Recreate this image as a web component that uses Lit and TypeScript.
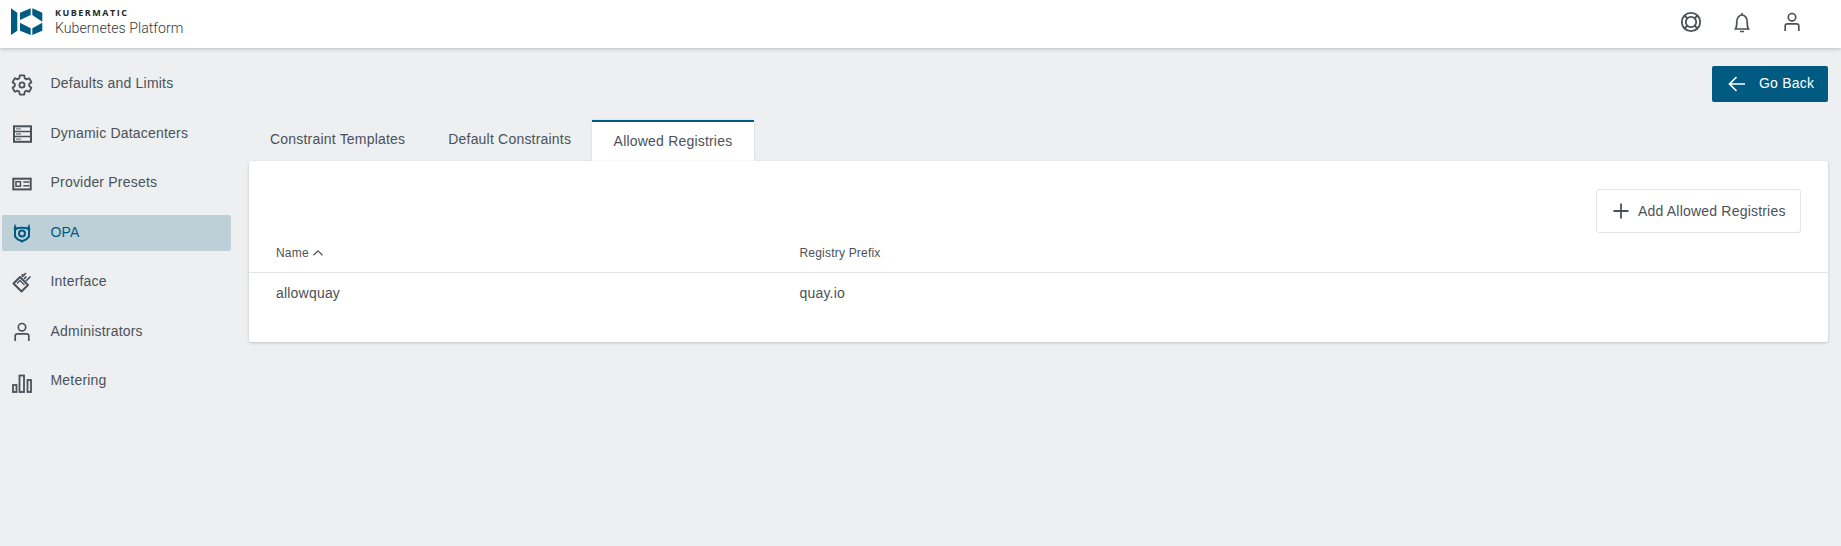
import { LitElement, html, css, svg } from "lit";
import { customElement } from "lit/decorators.js";

const I = (p: unknown, s = 24) => html`<svg class="ic" width=${s} height=${s} viewBox="0 0 24 24" fill="none" stroke="currentColor" stroke-width="1.7">${p}</svg>`;
const person = svg`<circle cx="12" cy="7.200" r="3.700"/><path d="M5.200 21v-5q0-2.200 2.200-2.200h9.200q2.200 0 2.200 2.200v5"/>`;
const nav = [
  ["Defaults and Limits", svg`<path stroke-width="1.800" stroke-linejoin="round" d="M19.140 12.940c.04-.3.06-.61.06-.94 0-.32-.02-.64-.07-.94l2.030-1.580c.18-.14.23-.41.12-.61l-1.920-3.320c-.12-.22-.37-.29-.59-.22l-2.390.96c-.5-.38-1.030-.7-1.620-.94l-.36-2.540c-.04-.24-.24-.41-.48-.41h-3.840c-.24 0-.43.17-.47.41l-.36 2.540c-.59.24-1.130.57-1.620.94l-2.390-.96c-.22-.08-.47 0-.59.22L2.740 8.870c-.12.21-.08.47.12.61l2.030 1.580c-.05.3-.09.63-.09.94s.02.64.07.94l-2.030 1.580c-.18.14-.23.41-.12.61l1.920 3.320c.12.22.37.29.59.22l2.390-.96c.5.38 1.030.7 1.620.94l.36 2.540c.05.24.24.41.48.41h3.840c.24 0 .44-.17.47-.41l.36-2.540c.59-.24 1.130-.56 1.620-.94l2.390.96c.22.08.47 0 .59-.22l1.920-3.320c.12-.22.07-.47-.12-.61l-2.010-1.580z"/><circle cx="12" cy="12" r="2.600" stroke-width="1.800"/>`],
  ["Dynamic Datacenters", svg`<rect x="4" y="4.300" width="17" height="15.500" stroke-width="2"/><path stroke-width="1.500" d="M4 9.500h17M4 14.600h17"/><path stroke-width="1.300" opacity=".7" d="M6 6.900h5M6 12h5M6 17.200h5"/>`],
  ["Provider Presets", svg`<rect x="3.300" y="6.700" width="17.400" height="10.700" stroke-width="2"/><rect x="6" y="9.700" width="4.500" height="4.500" stroke-width="1.500"/><path stroke-width="1.500" d="M13.300 10h6M13.300 13.800h6"/>`],
  ["OPA", svg`<path fill="currentColor" stroke="none" d="M3.600 8.500L4.800 2.500l1.700 3.800v3zM20.400 8.500L19.200 2.500l-1.700 3.800v3z"/><path stroke-width="2" d="M5 8q7-2.600 14 0"/><path stroke-width="2" d="M5 8v7.500l2.800 3 4.200 1.700 4.200-1.700 2.800-3V8"/><path stroke-width="1.600" d="M12 19.500v2"/><circle cx="12" cy="12.500" r="3" stroke-width="2"/>`],
  ["Interface", svg`<path stroke-width="2" stroke-linejoin="round" d="M3.500 12.500L10 6l8 8-6.500 6.500z"/><path stroke-width="1.300" d="M7 12.500l3-3 4.500 4.500"/><path stroke-width="1.700" d="M12 6l4-4M14 8l2.500-2.500M16 10l4.500-4.500M11.500 3.500l3 1.500"/>`],
  ["Administrators", person],
  ["Metering", svg`<rect x="3" y="15" width="3.500" height="7" stroke-width="1.800"/><rect x="9.500" y="5.500" width="4.500" height="16.500" stroke-width="1.800"/><rect x="17.500" y="10" width="3.500" height="12" stroke-width="1.800"/>`],
];

@customElement("app-root")
export class AppRoot extends LitElement {
  static styles = css`
    :host { display: block; height: 546px; background: #edeff1; color: #4a5259; font-family: "Liberation Sans", Arial, sans-serif; font-size: 14px; letter-spacing: .2px; overflow: hidden; }
    .ic { display: block; flex: none; }
    header { height: 48px; background: #fff; box-shadow: 0 1px 4px rgba(0,0,0,.22); display: flex; align-items: center; position: relative; }
    .logo { margin-left: 11px; margin-top: -4px; display: block; }
    .brand { margin-left: 12px; display: flex; flex-direction: column; letter-spacing: 0; margin-top: -5px; }
    .brand b { font: 700 9px "Open Sans", sans-serif; letter-spacing: 1.5px; color: #24292d; line-height: 11px; }
    .brand span { font: 300 14.2px Roboto, sans-serif; color: #333a40; line-height: 18px; margin-top: 1px; }
    .top { margin-left: auto; display: flex; gap: 26px; margin-right: 37px; margin-top: -4px; }
    .top .ic:first-child { margin-right: 1px; }
    .body { display: grid; grid-template-columns: 249px 1fr; }
    nav { padding: 18.500px 18px 0 2px; display: flex; flex-direction: column; gap: 13.500px; }
    .item { height: 36px; display: flex; align-items: center; border-radius: 2px; padding-left: 8px; gap: 16.500px; }
    .item span { padding-bottom: 3px; }
    .item.on { background: #bdd0d8; color: #005a81; }
    main { padding: 18px 13px 0 0; }
    .back { display: flex; justify-content: flex-end; }
    .go { width: 116px; height: 36px; box-sizing: border-box; background: #005a81; color: #fff; border-radius: 2px; display: flex; align-items: center; padding-left: 13px; gap: 10px; }
    .go span { padding-bottom: 2px; }
    .tabs { display: flex; margin-top: 18px; height: 41px; }
    .tab { display: flex; align-items: center; padding: 0 21.500px 4px; }
    .tab:first-child { padding-left: 21px; }
    .tab.on { background: #fff; border-top: 2px solid #005a81; box-sizing: border-box; padding: 0 22px 2px; margin-left: -1px; box-shadow: 0 0 2px rgba(0,0,0,.12); }
    .card { position: relative; background: #fff; border-radius: 2px; box-shadow: 0 1px 3px rgba(0,0,0,.2); height: 181px; padding-top: 28px; box-sizing: border-box; }
    .bar { display: flex; justify-content: flex-end; padding-right: 27px; }
    .add { width: 205px; height: 44px; box-sizing: border-box; border: 1px solid #e2e4e6; border-radius: 3px; display: flex; align-items: center; padding-left: 11.500px; gap: 5.500px; }
    .row { display: grid; grid-template-columns: 523.500px 1fr; padding-left: 27px; align-items: center; }
    .head { font-size: 12px; height: 39px; border-bottom: 1px solid #e3e5e7; }
    .name { display: flex; align-items: center; }
    .cell { height: 40px; }
  `;
  render() {
    return html`
      <header>
        <svg class="logo" width="32" height="28" viewBox="0 0 32 28" fill="#005a81">
          <path d="M0 .3L6.300 4.700V22.700L0 27zM9 4.700L19.700.3V7L9 12zM21.300.3L31.300 4.700V13.700L21.300 7zM9 14.700L19.700 20.300V27L9 22.700zM21.300 20.300L31.300 14.700V22.700L21.300 27z"/>
        </svg>
        <div class="brand"><b>KUBERMATIC</b><span>Kubernetes Platform</span></div>
        <div class="top">
          ${I(svg`<circle cx="12" cy="12" r="9.200" stroke-width="1.800"/><circle cx="12" cy="12" r="5.200" stroke-width="1.800"/><path stroke-width="1.800" d="M5.500 5.500l3 3M18.500 5.500l-3 3M5.500 18.500l3-3M18.500 18.500l-3-3"/>`)}
          ${I(svg`<path d="M5.500 19c1.200-1.800 1.300-3.500 1.300-7 0-4 2.300-7 5.200-7s5.200 3 5.200 7c0 3.500.1 5.200 1.300 7zM10 21.500h4M12 3v2"/>`)}
          ${I(person)}
        </div>
      </header>
      <div class="body">
        <nav>${nav.map(([t, p]) => html`<div class="item ${t === "OPA" ? "on" : ""}">${I(p)}<span>${t}</span></div>`)}</nav>
        <main>
          <div class="back"><div class="go">${I(svg`<path stroke-width="1.700" d="M20 12H4.500M11.500 5l-7 7 7 7"/>`)}<span>Go Back</span></div></div>
          <div class="tabs">
            <div class="tab">Constraint Templates</div>
            <div class="tab">Default Constraints</div>
            <div class="tab on">Allowed Registries</div>
          </div>
          <div class="card">
            <div class="bar"><div class="add">${I(svg`<path stroke-width="1.800" d="M12 4.500v15M4.500 12h15"/>`)}<span>Add Allowed Registries</span></div></div>
            <div class="row head"><div class="name">Name ${I(svg`<path d="M6 15l6-6 6 6" stroke-width="1.500"/>`, 18)}</div><div>Registry Prefix</div></div>
            <div class="row cell"><div>allowquay</div><div>quay.io</div></div>
          </div>
        </main>
      </div>
    `;
  }
}
